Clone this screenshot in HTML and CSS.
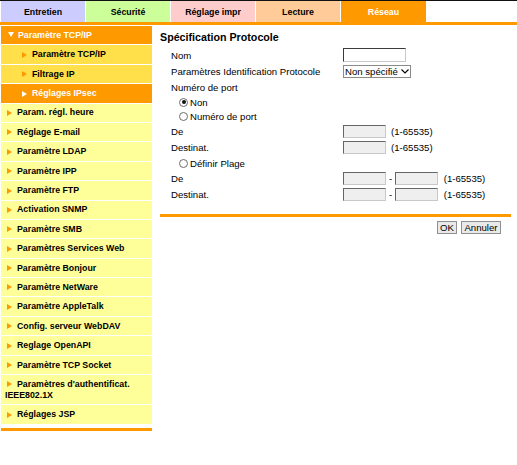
FILE: index.html
```html
<!DOCTYPE html>
<html lang="fr">
<head>
<meta charset="utf-8">
<title>Spécification Protocole</title>
<link rel="stylesheet" href="styles.css">
</head>
<body>
<div class="tabbar">
  <div class="tab t-entretien">Entretien</div>
  <div class="tab t-securite">Sécurité</div>
  <div class="tab t-reglage">Réglage impr</div>
  <div class="tab t-lecture">Lecture</div>
  <div class="tab t-reseau">Réseau</div>
</div>
<div class="tabline"></div>
<div class="layout">
  <nav class="sidebar">
    <ul class="menu">
      <li class="head">Paramètre TCP/IP</li>
      <li class="sub">Paramètre TCP/IP</li>
      <li class="sub">Filtrage IP</li>
      <li class="sub active">Réglages IPsec</li>
      <li class="item">Param. régl. heure</li>
      <li class="item">Réglage E-mail</li>
      <li class="item">Paramètre LDAP</li>
      <li class="item">Paramètre IPP</li>
      <li class="item">Paramètre FTP</li>
      <li class="item">Activation SNMP</li>
      <li class="item">Paramètre SMB</li>
      <li class="item">Paramètres Services Web</li>
      <li class="item">Paramètre Bonjour</li>
      <li class="item">Paramètre NetWare</li>
      <li class="item">Paramètre AppleTalk</li>
      <li class="item">Config. serveur WebDAV</li>
      <li class="item">Reglage OpenAPI</li>
      <li class="item">Paramètre TCP Socket</li>
      <li class="item">Paramètres d'authentificat. IEEE802.1X</li>
      <li class="item">Réglages JSP</li>
    </ul>
    <div class="sidebar-foot"></div>
  </nav>
  <main class="content">
    <h1 class="title">Spécification Protocole</h1>
    <div class="form">
      <div class="row h16"><span class="lbl">Nom</span><input class="txt name" type="text"></div>
      <div class="row h17"><span class="lbl">Paramètres Identification Protocole</span>
        <span class="select">Non spécifié<svg class="chev" width="8" height="5" viewBox="0 0 8 5"><path d="M0.5 0.5 L4 4 L7.5 0.5" fill="none" stroke="#000" stroke-width="1.1"/></svg></span></div>
      <div class="row h15"><span class="lbl">Numéro de port</span></div>
      <div class="row h14"><span class="lbl radio-lbl"><span class="radio checked"></span>Non</span></div>
      <div class="row h15"><span class="lbl radio-lbl"><span class="radio"></span>Numéro de port</span></div>
      <div class="row h155"><span class="lbl">De</span><input class="txt port" type="text" disabled><span class="range">(1-65535)</span></div>
      <div class="row h155"><span class="lbl">Destinat.</span><input class="txt port" type="text" disabled><span class="range">(1-65535)</span></div>
      <div class="row h16"><span class="lbl radio-lbl"><span class="radio"></span>Définir Plage</span></div>
      <div class="row h155"><span class="lbl">De</span><input class="txt port" type="text" disabled><span class="dash">-</span><input class="txt port" type="text" disabled><span class="range wide">(1-65535)</span></div>
      <div class="row h155"><span class="lbl">Destinat.</span><input class="txt port" type="text" disabled><span class="dash">-</span><input class="txt port" type="text" disabled><span class="range wide">(1-65535)</span></div>
    </div>
    <div class="rule"></div>
    <div class="actions">
      <button class="btn ok" type="button">OK</button>
      <button class="btn cancel" type="button">Annuler</button>
    </div>
  </main>
</div>
</body>
</html>
```

FILE: styles.css
```css
html, body {
  margin: 0;
  padding: 0;
  background: #fff;
}
body {
  font-family: "Liberation Sans", Arial, sans-serif;
  color: #000;
  width: 517px;
  height: 465px;
  overflow: hidden;
}

/* Tabs */
.tabbar {
  display: flex;
  gap: 1px;
  padding-left: 1px;
  height: 21px;
  border-top: 1px solid #111;
}
.tab {
  width: 84px;
  height: 21px;
  display: flex;
  align-items: center;
  justify-content: center;
  font-size: 8.8px;
  font-weight: bold;
}
.t-entretien { background: #ccccff; }
.t-securite { background: #ccff99; }
.t-reglage { background: #ffcccc; }
.t-lecture { background: #ffcc99; }
.t-reseau { background: #ff9900; color: #fff; width: 85px; }
.tabline {
  height: 3px;
  background: #ff9900;
}

/* Layout */
.layout {
  display: flex;
  margin-top: 1px;
}
.sidebar {
  width: 151px;
  margin-left: 1px;
  flex: none;
}
.menu {
  list-style: none;
  margin: 0;
  padding: 0;
}
.menu li {
  font-size: 8.8px;
  font-weight: bold;
  line-height: 11px;
  padding: 3.9px 2px 3.5px 4px;
  border-bottom: 1px solid #fff;
}
.menu li::before {
  content: "";
  display: inline-block;
  width: 0;
  height: 0;
  border-top: 3px solid transparent;
  border-bottom: 3px solid transparent;
  border-left: 5px solid #ff9900;
  margin-left: 2px;
  margin-right: 5px;
  vertical-align: -0.5px;
}
.menu .head {
  background: #ff9900;
  color: #fff;
}
.menu .head::before {
  border-left: 3px solid transparent;
  border-right: 3px solid transparent;
  border-top: 5px solid #fff;
  border-bottom: 0;
  margin-left: 3px;
  margin-right: 4px;
  vertical-align: 1px;
}
.menu .sub {
  background: #ffdf4a;
  padding-left: 19px;
}
.menu .sub.active {
  background: #ff9900;
  color: #fff;
}
.menu .sub.active::before {
  border-left-color: #fff;
}
.menu .item {
  background: #ffff99;
}
.sidebar-foot {
  height: 3px;
  background: #ff9900;
  margin-top: 3px;
}

/* Content */
.content {
  flex: 1;
  margin-left: 8px;
  margin-right: 6px;
}
.title {
  font-size: 10.7px;
  font-weight: bold;
  line-height: 13px;
  margin: 4.5px 0 3.5px 0;
}
.form {
  font-size: 9.6px;
}
.row {
  display: flex;
  align-items: center;
  padding-left: 11px;
}
.h14 { height: 14px; }
.h15 { height: 15px; }
.h155 { height: 15.5px; }
.h16 { height: 16px; }
.h17 { height: 17px; }
.lbl {
  width: 172px;
  flex: none;
  display: flex;
  align-items: center;
}
.radio-lbl {
  padding-left: 8px;
  width: 164px;
}
.radio {
  width: 9px;
  height: 9px;
  box-sizing: border-box;
  border: 1px solid #6d6d6d;
  border-radius: 50%;
  background: #fff;
  margin-right: 2px;
  position: relative;
  flex: none;
}
.radio.checked::after {
  content: "";
  position: absolute;
  left: 1.5px;
  top: 1.5px;
  width: 4px;
  height: 4px;
  border-radius: 50%;
  background: #111;
}
.txt {
  box-sizing: border-box;
  margin: 0;
  padding: 0;
  border: 1px solid;
  border-color: #3a3a3a #c8c8c8 #c8c8c8 #3a3a3a;
  background: #fff;
  font-size: 9.6px;
  flex: none;
}
.txt.name {
  width: 63px;
  height: 14px;
}
.txt.port {
  width: 43px;
  height: 13px;
  background: #efefef;
  border-color: #666 #c8c8c8 #c8c8c8 #666;
}
.select {
  box-sizing: border-box;
  width: 68px;
  height: 13px;
  border: 1px solid #8a8a8a;
  background: #fff;
  display: flex;
  align-items: center;
  padding-left: 1px;
  font-size: 9.6px;
  white-space: nowrap;
}
.chev {
  margin-left: 3px;
  flex: none;
}
.range {
  margin-left: 5px;
}
.range.wide {
  margin-left: 6px;
}
.dash {
  margin-left: 3px;
  margin-right: 2.5px;
}
.rule {
  height: 3px;
  background: #ff9900;
  margin-top: 12px;
}
.actions {
  display: flex;
  justify-content: flex-end;
  gap: 4px;
  margin-top: 4px;
  padding-right: 10px;
}
.btn {
  box-sizing: border-box;
  height: 13px;
  padding: 0;
  margin: 0;
  font-family: "Liberation Sans", Arial, sans-serif;
  font-size: 9.6px;
  line-height: 11px;
  background: #e9e9e9;
  border: 1px solid #8f8f8f;
  border-radius: 0;
  color: #000;
}
.btn.ok {
  width: 20px;
}
.btn.cancel {
  width: 40px;
}
```
